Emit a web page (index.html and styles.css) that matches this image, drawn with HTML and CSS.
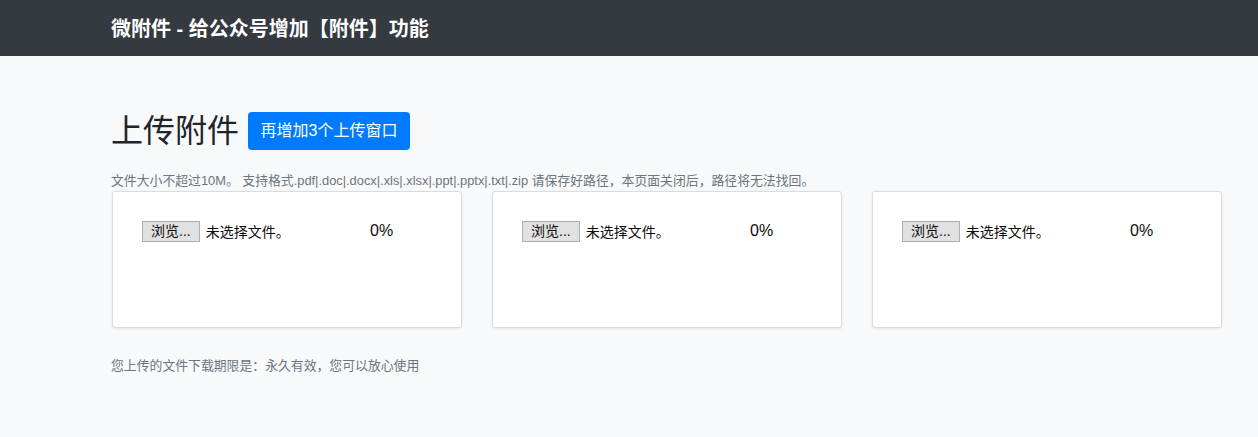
FILE: index.html
```html
<!DOCTYPE html>
<html lang="zh-CN">
<head>
<meta charset="utf-8">
<title>微附件</title>
<link rel="stylesheet" href="styles.css">
</head>
<body>
<header class="topbar">
  <div class="wrap"><span class="brand">微附件 - 给公众号增加【附件】功能</span></div>
</header>
<main class="wrap main">
  <div class="title-row">
    <h1 class="title">上传附件</h1>
    <button class="btn-add" type="button">再增加3个上传窗口</button>
  </div>
  <p class="note">文件大小不超过10M。 支持格式.pdf|.doc|.docx|.xls|.xlsx|.ppt|.pptx|.txt|.zip 请保存好路径，本页面关闭后，路径将无法找回。</p>
  <div class="cards">
    <div class="card">
      <div class="file-row">
        <div class="file-input"><span class="browse">浏览...</span><span class="nofile">未选择文件。</span></div>
        <span class="pct">0%</span>
      </div>
    </div>
    <div class="card">
      <div class="file-row">
        <div class="file-input"><span class="browse">浏览...</span><span class="nofile">未选择文件。</span></div>
        <span class="pct">0%</span>
      </div>
    </div>
    <div class="card">
      <div class="file-row">
        <div class="file-input"><span class="browse">浏览...</span><span class="nofile">未选择文件。</span></div>
        <span class="pct">0%</span>
      </div>
    </div>
  </div>
  <p class="note bottom">您上传的文件下载期限是：永久有效，您可以放心使用</p>
</main>
</body>
</html>
```

FILE: styles.css
```css
* { box-sizing: border-box; }
html, body { margin: 0; padding: 0; }
body {
  background: #f8f9fa;
  font-family: "Liberation Sans", "Noto Sans CJK SC", sans-serif;
  color: #212529;
  height: 437px;
  overflow: hidden;
}
.wrap { padding-left: 111px; padding-right: 36px; }
.topbar {
  background: #343a40;
  height: 56px;
  display: flex;
  align-items: center;
}
.brand {
  color: #fff;
  font-size: 20px;
  font-weight: 700;
  line-height: 1;
  display: block;
  margin-top: 2px;
}
.main { padding-top: 56px; }
.title-row {
  display: flex;
  align-items: center;
  gap: 10px;
  height: 38px;
}
.title {
  margin: 0;
  font-size: 32px;
  font-weight: 400;
  line-height: 1;
  color: #212529;
}
.btn-add {
  background: #007bff;
  color: #fff;
  border: none;
  border-radius: 4px;
  font-family: inherit;
  font-size: 16px;
  height: 38px;
  padding: 0 12.5px;
  line-height: 1;
  margin-left: -1px;
}
.note {
  margin: 22px 0 0;
  font-size: 12.85px;
  color: #6c757d;
  line-height: 18px;
  height: 18px;
  white-space: nowrap;
}
.cards {
  display: grid;
  grid-template-columns: repeat(3, 350px);
  gap: 30px;
  margin-top: 1px;
  padding-left: 1px;
}
.card {
  background: #fff;
  border: 1px solid #dcdcdc;
  border-radius: 3px;
  height: 137px;
  box-shadow: 0 1px 3px rgba(0,0,0,0.08);
  padding: 28px 29px;
}
.file-row {
  display: flex;
  align-items: center;
  height: 22px;
}
.file-input {
  width: 228px;
  display: flex;
  align-items: center;
  gap: 6px;
  font-size: 14px;
  color: #0c0c0c;
}
.browse {
  display: inline-block;
  height: 21px;
  line-height: 19px;
  padding: 0 8px;
  background: #e1e1e1;
  border: 1px solid #adadad;
  font-size: 14px;
}
.nofile { font-size: 14px; }
.pct { font-size: 16px; color: #0c0c0c; }
.bottom { margin-top: 29px; }
```
